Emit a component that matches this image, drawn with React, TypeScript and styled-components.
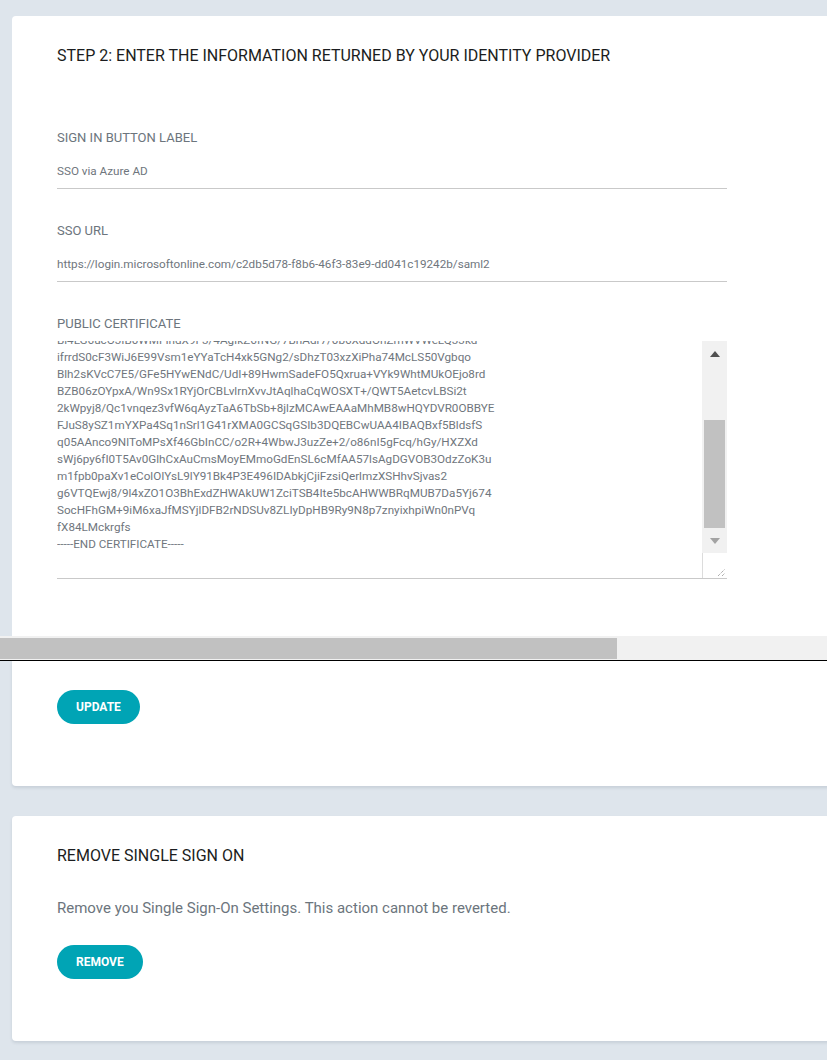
import React from "react";
import styled, { createGlobalStyle } from "styled-components";

const GlobalStyle = createGlobalStyle`
  html, body {
    margin: 0;
    padding: 0;
    overflow: hidden;
    background: #dee5ec;
  }
  body {
    font-family: Roboto, "Noto Sans", "Liberation Sans", sans-serif;
  }
  * { box-sizing: border-box; }
`;

const Page = styled.div`
  width: 900px;
  min-height: 1060px;
  display: flex;
  flex-direction: column;
  background: #dee5ec;
`;

const CardWrap = styled.div<{ $top?: number }>`
  padding-left: 12px;
  padding-top: ${(p) => p.$top ?? 0}px;
`;

const CardPart = styled.section<{ $part: "top" | "bottom" | "whole"; $pad: string }>`
  background: #ffffff;
  padding: ${(p) => p.$pad};
  border-radius: ${(p) =>
    p.$part === "top" ? "4px 0 0 0" : p.$part === "bottom" ? "0 0 0 4px" : "4px 0 0 4px"};
  box-shadow: ${(p) => (p.$part === "top" ? "none" : "0 2px 3px rgba(40, 60, 80, 0.12)")};
  display: flex;
  flex-direction: column;
  align-items: flex-start;
`;

const Title = styled.h2`
  margin: 0;
  font-size: 16px;
  line-height: 20px;
  font-weight: 400;
  color: #1b1d20;
  text-transform: uppercase;
`;

const Fields = styled.div`
  margin-top: 64px;
  width: 670px;
  display: flex;
  flex-direction: column;
  gap: 34px;
`;

const Field = styled.div`
  display: flex;
  flex-direction: column;
`;

const Label = styled.label`
  font-size: 13px;
  line-height: 16px;
  color: #6c757d;
  text-transform: uppercase;
`;

const Value = styled.div`
  margin-top: 17px;
  font-size: 11.7px;
  line-height: 16px;
  color: #6f767d;
  padding-bottom: 9px;
  border-bottom: 1px solid #c9c9c9;
  white-space: nowrap;
`;

const CertBox = styled.div`
  margin-top: 9px;
  display: flex;
  border-bottom: 1px solid #c9c9c9;
  height: 238px;
`;

const CertViewport = styled.div`
  flex: 1;
  height: 237px;
  overflow: hidden;
`;

const CertText = styled.pre`
  margin: -9px 0 0 0;
  font-family: Roboto, "Noto Sans", "Liberation Sans", sans-serif;
  font-size: 11.7px;
  line-height: 17px;
  color: #6f767d;
  white-space: pre;
`;

const ScrollCol = styled.div`
  width: 25px;
  display: flex;
  flex-direction: column;
`;

const Track = styled.div`
  height: 212px;
  background: #f1f1f1;
  display: flex;
  flex-direction: column;
  align-items: center;
`;

const ArrowBtn = styled.div`
  height: 25px;
  width: 25px;
  display: flex;
  align-items: center;
  justify-content: center;
`;

const Arrow = styled.div<{ $dir: "up" | "down" }>`
  width: 0;
  height: 0;
  border-left: 5.5px solid transparent;
  border-right: 5.5px solid transparent;
  ${(p) =>
    p.$dir === "up"
      ? "border-bottom: 6px solid #505050;"
      : "border-top: 6px solid #a3a3a3;"}
`;

const VThumb = styled.div`
  width: 21px;
  background: #c1c1c1;
`;

const Spacer = styled.div`
  flex: 1;
`;

const Corner = styled.div`
  height: 25px;
  background: #ffffff;
  border-left: 1px solid #dcdcdc;
  display: flex;
  align-items: flex-end;
  justify-content: flex-end;
  padding: 0 2px 2px 0;
`;

const HScroll = styled.div`
  height: 25px;
  background: #f1f1f1;
  padding-top: 2px;
  border-bottom: 1px solid #000000;
`;

const HThumb = styled.div`
  height: 21px;
  width: 617px;
  background: #c1c1c1;
`;

const Button = styled.button`
  height: 34px;
  padding: 0 19px;
  border: none;
  border-radius: 17px;
  background: #00a4b5;
  color: #ffffff;
  font-family: Roboto, "Noto Sans", "Liberation Sans", sans-serif;
  font-size: 12px;
  font-weight: 700;
  text-transform: uppercase;
  cursor: pointer;
`;

const Description = styled.p`
  margin: 32px 0 27px 0;
  font-size: 15px;
  line-height: 20px;
  color: #6c757d;
`;

const certLines = [
  "Bl4LG6ucO3IB0WMFIndX9F3/4AgIkZ6fNG/7BnAdr7/0b6XddOnZmWVWeLQ33kd",
  "ifrrdS0cF3WiJ6E99Vsm1eYYaTcH4xk5GNg2/sDhzT03xzXiPha74McLS50Vgbqo",
  "Blh2sKVcC7E5/GFe5HYwENdC/UdI+89HwmSadeFO5Qxrua+VYk9WhtMUkOEjo8rd",
  "BZB06zOYpxA/Wn9Sx1RYjOrCBLvlrnXvvJtAqlhaCqWOSXT+/QWT5AetcvLBSi2t",
  "2kWpyj8/Qc1vnqez3vfW6qAyzTaA6TbSb+8jlzMCAwEAAaMhMB8wHQYDVR0OBBYE",
  "FJuS8ySZ1mYXPa4Sq1nSrl1G41rXMA0GCSqGSIb3DQEBCwUAA4IBAQBxf5BldsfS",
  "q05AAnco9NlToMPsXf46GbInCC/o2R+4WbwJ3uzZe+2/o86nI5gFcq/hGy/HXZXd",
  "sWj6py6fI0T5Av0GlhCxAuCmsMoyEMmoGdEnSL6cMfAA57lsAgDGVOB3OdzZoK3u",
  "m1fpb0paXv1eColOIYsL9lY91Bk4P3E496IDAbkjCjiFzsiQerlmzXSHhvSjvas2",
  "g6VTQEwj8/9l4xZO1O3BhExdZHWAkUW1ZciTSB4Ite5bcAHWWBRqMUB7Da5Yj674",
  "SocHFhGM+9iM6xaJfMSYjlDFB2rNDSUv8ZLIyDpHB9Ry9N8p7znyixhpiWn0nPVq",
  "fX84LMckrgfs",
  "-----END CERTIFICATE-----",
];

const ResizeGrip = () => (
  <svg width="8" height="8" viewBox="0 0 8 8">
    <line x1="1" y1="8" x2="8" y2="1" stroke="#8a8a8a" strokeWidth="1" strokeDasharray="1 1" />
    <line x1="5" y1="8" x2="8" y2="5" stroke="#8a8a8a" strokeWidth="1" strokeDasharray="1 1" />
  </svg>
);

export default function App() {
  const thumbOffset = 54;
  return (
    <>
      <GlobalStyle />
      <Page>
        <CardWrap $top={16}>
          <CardPart $part="top" $pad="30px 45px 57px 45px">
            <Title>Step 2: Enter the information returned by your identity provider</Title>
            <Fields>
              <Field>
                <Label>Sign in button label</Label>
                <Value>SSO via Azure AD</Value>
              </Field>
              <Field>
                <Label>SSO URL</Label>
                <Value>
                  https://login.microsoftonline.com/c2db5d78-f8b6-46f3-83e9-dd041c19242b/saml2
                </Value>
              </Field>
              <Field>
                <Label>Public certificate</Label>
                <CertBox>
                  <CertViewport>
                    <CertText>{certLines.join("\n")}</CertText>
                  </CertViewport>
                  <ScrollCol>
                    <Track>
                      <ArrowBtn>
                        <Arrow $dir="up" />
                      </ArrowBtn>
                      <VThumb style={{ marginTop: thumbOffset, height: 108 }} />
                      <Spacer />
                      <ArrowBtn>
                        <Arrow $dir="down" />
                      </ArrowBtn>
                    </Track>
                    <Corner>
                      <ResizeGrip />
                    </Corner>
                  </ScrollCol>
                </CertBox>
              </Field>
            </Fields>
          </CardPart>
        </CardWrap>
        <HScroll>
          <HThumb />
        </HScroll>
        <CardWrap>
          <CardPart $part="bottom" $pad="29px 45px 62px 45px">
            <Button>Update</Button>
          </CardPart>
        </CardWrap>
        <CardWrap $top={30}>
          <CardPart $part="whole" $pad="30px 45px 62px 45px">
            <Title>Remove single sign on</Title>
            <Description>Remove you Single Sign-On Settings. This action cannot be reverted.</Description>
            <Button>Remove</Button>
          </CardPart>
        </CardWrap>
      </Page>
    </>
  );
}
